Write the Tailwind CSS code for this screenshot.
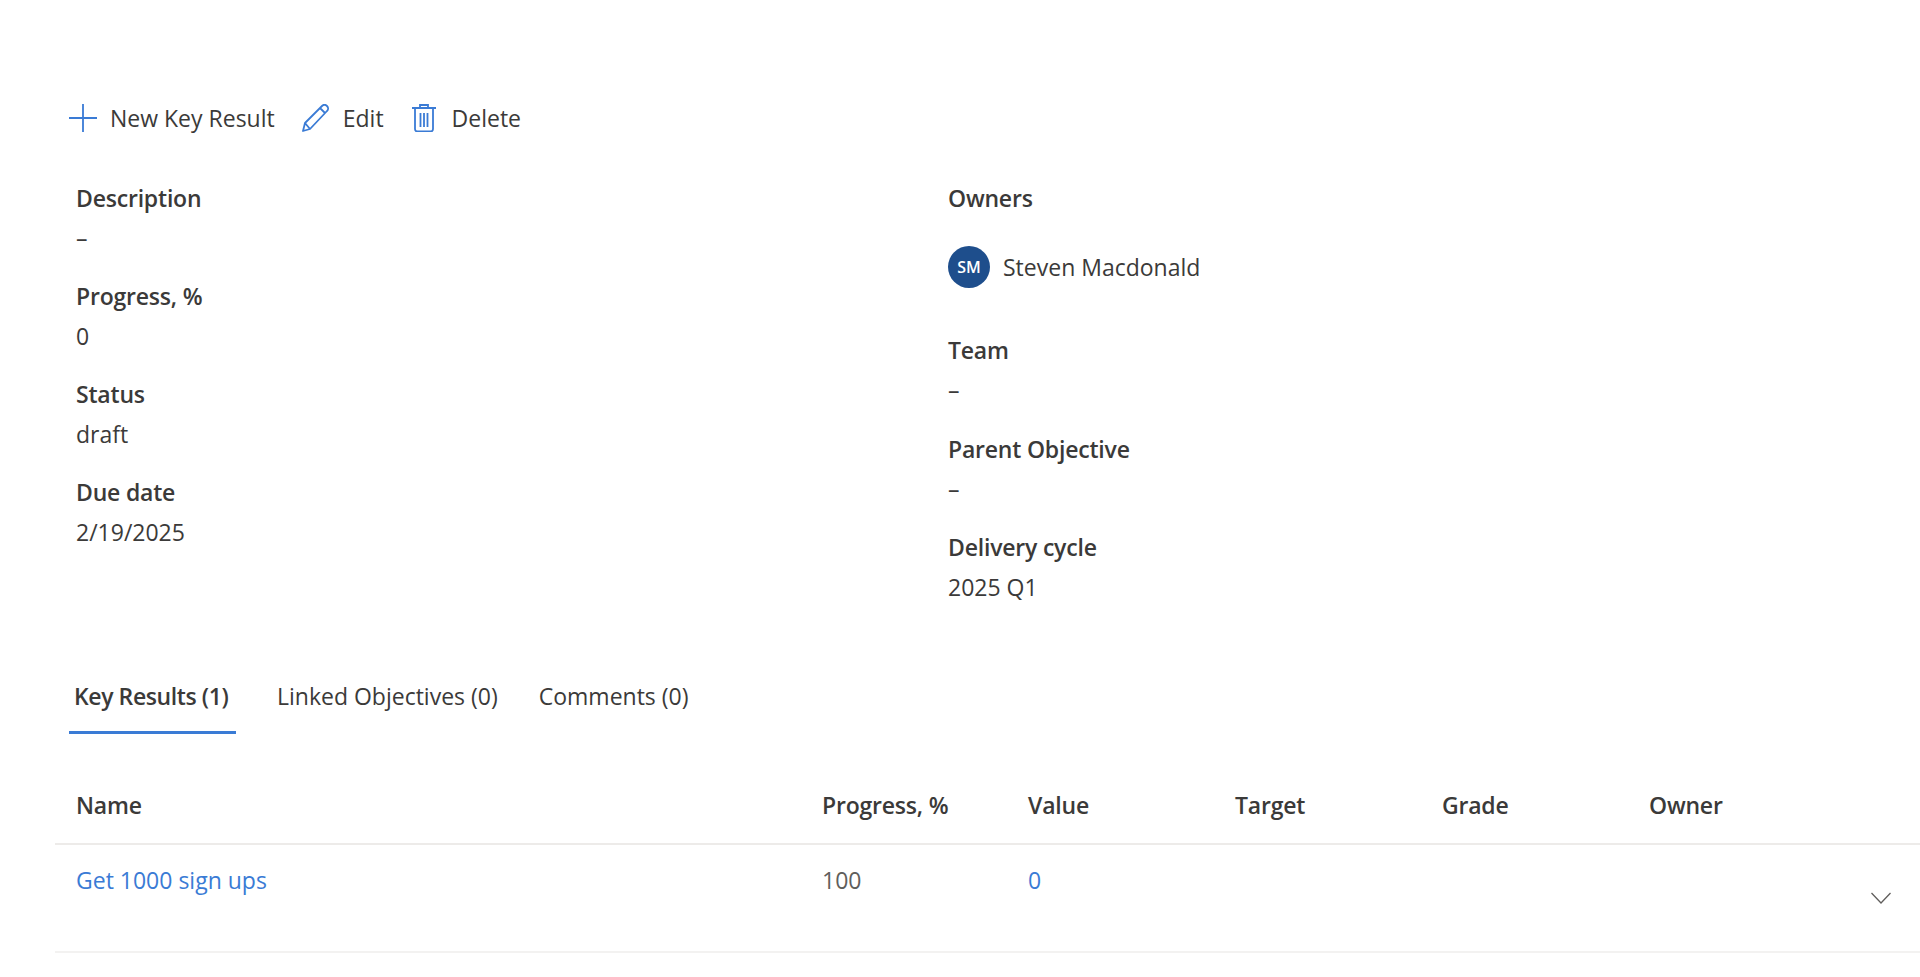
<!DOCTYPE html>
<html lang="en">
<head>
    <meta charset="UTF-8">
    <title>Objective details</title>
    <script src="https://cdn.jsdelivr.net/npm/@tailwindcss/browser@4"></script>
</head>
<body class="bg-white h-[977px] overflow-hidden font-['Open_Sans','Noto_Sans',sans-serif] text-[23px] leading-[32px] text-[#3b3a39]">
    <!--Toolbar-->
    <div class="flex items-center h-[44px] mt-[96px] pl-[69px]">
        <button class="flex items-center gap-[13px] mr-[27px]">
            <svg class="w-[28px] h-[28px]" viewBox="0 0 28 28" fill="none" stroke="#3a7bd5" stroke-width="1.8"><path d="M0 14H28M14 0V28"/></svg>
            <span>New Key Result</span>
        </button>
        <button class="flex items-center gap-[13px] mr-[28px]">
            <svg class="w-[28px] h-[28px]" viewBox="0 0 28 28" fill="none" stroke="#3a7bd5" stroke-width="1.8" stroke-linejoin="round"><path d="M1 27l2-8L20 2c1.500-1.500 3.500-1.500 5 0s1.500 3.500 0 5L8 25zM3 19l5 6M18 4l5 5"/></svg>
            <span>Edit</span>
        </button>
        <button class="flex items-center gap-[16px]">
            <svg class="w-[24px] h-[28px]" viewBox="0 0 24 28" fill="none" stroke="#3a7bd5" stroke-width="1.8"><path d="M0 4H24M8 4V1h8v3M3 4v21c0 1.500 1 2.500 2.500 2.500h13c1.500 0 2.500-1 2.500-2.500V4M8.500 9v14M12 9v14M15.500 9v14"/></svg>
            <span>Delete</span>
        </button>
    </div>

    <!--Details-->
    <div class="grid grid-cols-[872px_1fr] pl-[76px] mt-[42px]">
        <div class="flex flex-col gap-[26px]">
            <div><div class="font-semibold tracking-[-0.2px]">Description</div><div class="mt-[8px]">–</div></div>
            <div><div class="font-semibold tracking-[-0.2px]">Progress, %</div><div class="mt-[8px]">0</div></div>
            <div><div class="font-semibold tracking-[-0.2px]">Status</div><div class="mt-[8px]">draft</div></div>
            <div><div class="font-semibold tracking-[-0.2px]">Due date</div><div class="mt-[8px]">2/19/2025</div></div>
        </div>
        <div class="flex flex-col">
            <div class="font-semibold tracking-[-0.2px]">Owners</div>
            <div class="flex items-center gap-[13px] mt-[32px] mb-[46px]">
                <div class="w-[42px] h-[42px] rounded-full bg-[#1e4e8c] text-white text-[16px] font-semibold flex items-center justify-center">SM</div>
                <span>Steven Macdonald</span>
            </div>
            <div class="flex flex-col gap-[26.500px]">
                <div><div class="font-semibold tracking-[-0.2px]">Team</div><div class="mt-[8px]">–</div></div>
                <div><div class="font-semibold tracking-[-0.2px]">Parent Objective</div><div class="mt-[8px]">–</div></div>
                <div><div class="font-semibold tracking-[-0.2px]">Delivery cycle</div><div class="mt-[8px]">2025 Q1</div></div>
            </div>
        </div>
    </div>

    <!--Tabs-->
    <div class="flex pl-[69px] mt-[77px] h-[54px]">
        <div class="w-[167px] pl-[5px] mr-[41px] font-semibold tracking-[-0.4px] border-b-[3px] border-[#3a7bd5]">Key Results (1)</div>
        <div class="mr-[41px]">Linked Objectives (0)</div>
        <div>Comments (0)</div>
    </div>

    <!--Table-->
    <div class="ml-[55px] mt-[55px]">
        <div class="grid grid-cols-[746px_206px_207px_207px_207px_1fr] pl-[21px] h-[56px] border-b-2 border-[#edebe9] font-semibold tracking-[-0.2px]">
            <div>Name</div><div>Progress, %</div><div>Value</div><div>Target</div><div>Grade</div><div>Owner</div>
        </div>
        <div class="relative grid grid-cols-[746px_206px_207px_207px_207px_1fr] pl-[21px] pt-[19px] h-[108px] border-b-2 border-[#f3f2f1]">
            <a class="text-[#3a7bd5]">Get 1000 sign ups</a><div class="text-[#605e5c]">100</div><a class="text-[#3a7bd5]">0</a><div></div><div></div><div></div>
            <svg class="absolute left-[1816px] top-[47px] w-[20px] h-[12px]" viewBox="0 0 20 12" fill="none" stroke="#605e5c" stroke-width="1.300"><path d="M0.500 1L10 11l9.500-10"/></svg>
        </div>
    </div>
</body>
</html>
